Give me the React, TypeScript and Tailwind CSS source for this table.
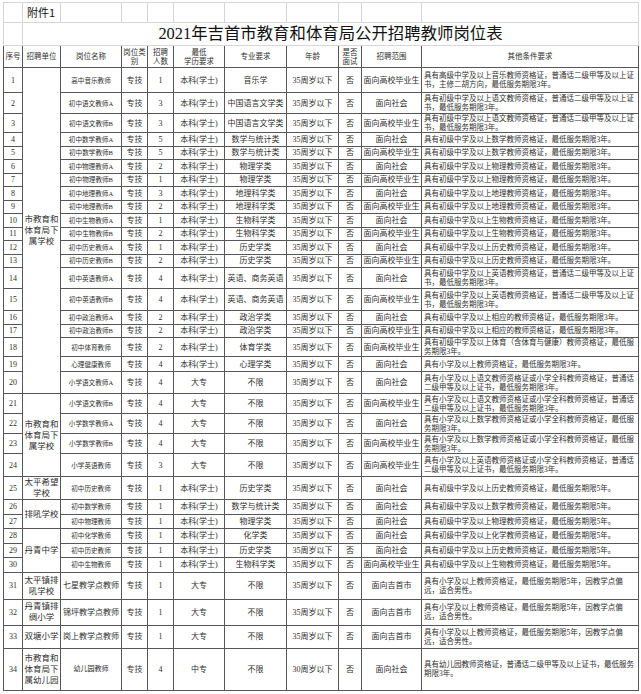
import React from "react";

type Row = [string, string, string, string, string, string, string, string, string, string];

const A3 = "具有初级中学及以上语文教师资格证，普通话二级甲等及以上证书，最低服务期限3年。";
const EN = "具有初级中学及以上英语教师资格证，普通话二级甲等及以上证书，最低服务期限3年。";
const ZZ = "具有初级中学及以上相应的教师资格证，最低服务期限3年。";
const XY = "具有小学及以上语文教师资格证或小学全科教师资格证，普通话二级甲等及以上证书，最低服务期限3年。";
const XS = "具有小学及以上数学教师资格证或小学全科教师资格证，最低服务期限3年。";
const JX = "具有小学及以上教师资格证，最低服务期限5年，因教学点偏远，适合男性。";
const cz = (s: string, y = 3) => `具有初级中学及以上${s}教师资格证，最低服务期限${y}年。`;

const BK = "本科(学士)";
const AGE = "35周岁以下";
const SH = "面向社会";
const GX = "面向高校毕业生";
const S = "h-[13.5px]";
const S2 = "h-[14.5px]";

// last field is the row height class
const rows: Row[] = [
  ["高中音乐教师", "专技", "1", BK, "音乐学", AGE, "否", GX, "具有高级中学及以上音乐教师资格证，普通话二级甲等及以上证书，主修二胡方向，最低服务期限3年。", "h-[25px]"],
  ["初中语文教师A", "专技", "3", BK, "中国语言文学类", AGE, "否", SH, A3, "h-[21px]"],
  ["初中语文教师B", "专技", "3", BK, "中国语言文学类", AGE, "否", GX, A3, "h-[19px]"],
  ["初中数学教师A", "专技", "5", BK, "数学与统计类", AGE, "否", SH, cz("数学"), S],
  ["初中数学教师B", "专技", "5", BK, "数学与统计类", AGE, "否", GX, cz("数学"), S],
  ["初中物理教师A", "专技", "2", BK, "物理学类", AGE, "否", SH, cz("物理"), S],
  ["初中物理教师B", "专技", "1", BK, "物理学类", AGE, "否", GX, cz("物理"), S],
  ["初中地理教师A", "专技", "3", BK, "地理科学类", AGE, "否", SH, cz("地理"), S],
  ["初中地理教师B", "专技", "2", BK, "地理科学类", AGE, "否", GX, cz("地理"), S],
  ["初中生物教师A", "专技", "1", BK, "生物科学类", AGE, "否", SH, cz("生物"), S],
  ["初中生物教师B", "专技", "2", BK, "生物科学类", AGE, "否", GX, cz("生物"), S],
  ["初中历史教师A", "专技", "1", BK, "历史学类", AGE, "否", SH, cz("历史"), S],
  ["初中历史教师B", "专技", "2", BK, "历史学类", AGE, "否", GX, cz("历史"), S],
  ["初中英语教师A", "专技", "4", BK, "英语、商务英语", AGE, "否", SH, EN, "h-[21px]"],
  ["初中英语教师B", "专技", "4", BK, "英语、商务英语", AGE, "否", GX, EN, "h-[22px]"],
  ["初中政治教师A", "专技", "2", BK, "政治学类", AGE, "否", SH, ZZ, S],
  ["初中政治教师B", "专技", "2", BK, "政治学类", AGE, "否", GX, ZZ, S],
  ["初中体育教师", "专技", "2", BK, "体育学类", AGE, "否", GX, "具有初级中学及以上体育（含体育与健康）教师资格证，最低服务期限3年。", "h-[19px]"],
  ["心理健康教师", "专技", "4", BK, "心理学类", AGE, "否", SH, "具有小学及以上教师资格证，最低服务期限3年。", "h-[15px]"],
  ["小学语文教师A", "专技", "4", "大专", "不限", AGE, "否", SH, XY, "h-[22px]"],
  ["小学语文教师B", "专技", "4", "大专", "不限", AGE, "否", GX, XY, "h-[20px]"],
  ["小学数学教师A", "专技", "4", "大专", "不限", AGE, "否", SH, XS, "h-[20px]"],
  ["小学数学教师B", "专技", "4", "大专", "不限", AGE, "否", GX, XS, "h-[20px]"],
  ["小学英语教师", "专技", "3", "大专", "不限", AGE, "否", GX, "具有小学及以上英语教师资格证或小学全科教师资格证，普通话二级甲等及以上证书，最低服务期限3年。", "h-[23px]"],
  ["初中历史教师", "专技", "1", BK, "历史学类", AGE, "否", SH, cz("历史", 5), "h-[19px]"],
  ["初中数学教师", "专技", "1", BK, "数学与统计类", AGE, "否", SH, cz("数学", 5), S2],
  ["初中物理教师", "专技", "1", BK, "物理学类", AGE, "否", SH, cz("物理", 5), S2],
  ["初中化学教师", "专技", "1", BK, "化学类", AGE, "否", SH, cz("化学", 5), S2],
  ["初中历史教师", "专技", "1", BK, "历史学类", AGE, "否", SH, cz("历史", 5), S2],
  ["初中生物教师", "专技", "1", BK, "生物科学类", AGE, "否", GX, cz("生物", 5), S2],
  ["七星教学点教师", "专技", "1", "大专", "不限", AGE, "否", "面向吉首市", JX, "h-[27px]"],
  ["锦坪教学点教师", "专技", "1", "大专", "不限", AGE, "否", "面向吉首市", JX, "h-[26px]"],
  ["岗上教学点教师", "专技", "1", "大专", "不限", AGE, "否", "面向吉首市", JX, "h-[23px]"],
  ["幼儿园教师", "专技", "4", "中专", "不限", "30周岁以下", "否", SH, "具有幼儿园教师资格证，普通话二级甲等及以上证书，最低服务期限3年。", "h-[42px]"],
];

const units: Record<number, [number, string]> = {
  1: [20, "市教育和\n体育局下\n属学校"],
  21: [4, "市教育和\n体育局下\n属学校"],
  25: [1, "太平希望\n学校"],
  26: [2, "排吼学校"],
  28: [3, "丹青中学"],
  31: [1, "太平镇排\n吼学校"],
  32: [1, "丹青镇排\n绸小学"],
  33: [1, "双塘小学"],
  34: [1, "市教育和\n体育局下\n属幼儿园"],
};

const td = "border border-[#575757] p-0 text-center align-middle";
const light = "border border-[#d6d6d6] p-0";

export default function App() {
  return (
    <div className="bg-white w-[641px] h-[694px] pl-[3px] pt-[2px] text-[#2f2f2f] font-['Liberation_Serif','Noto_Sans_CJK_SC',serif] text-[8px] leading-[9px]">
      <table className="table-fixed border-collapse w-[635px]">
        <colgroup>
          <col className="w-[19px]" />
          <col className="w-[38px]" />
          <col className="w-[61px]" />
          <col className="w-[26px]" />
          <col className="w-[26px]" />
          <col className="w-[51px]" />
          <col className="w-[62px]" />
          <col className="w-[52px]" />
          <col className="w-[23px]" />
          <col className="w-[60px]" />
          <col className="w-[217px]" />
        </colgroup>
        <tbody>
          <tr className="h-[20px]">
            <td className={light} />
            <td className={`${light} pl-[4px] text-[11px] text-[#111] font-['Noto_Sans_CJK_SC',sans-serif]`}>附件1</td>
            {Array.from({ length: 9 }).map((_, i) => (
              <td key={i} className={light} />
            ))}
          </tr>
          <tr className="h-[23px]">
            <td className={light} />
            <td className={`${light} text-center text-[16.4px] leading-[20px] text-[#111]`} colSpan={10}>
              2021年吉首市教育和体育局公开招聘教师岗位表
            </td>
          </tr>
          <tr className="h-[22px] text-[7.5px] whitespace-pre-line">
            <td className={td}>序号</td>
            <td className={td}>招聘单位</td>
            <td className={td}>岗位名称</td>
            <td className={td}>{"岗位类\n别"}</td>
            <td className={td}>{"招聘\n人数"}</td>
            <td className={td}>{"最低\n学历要求"}</td>
            <td className={td}>专业要求</td>
            <td className={td}>年龄</td>
            <td className={td}>{"是否\n面试"}</td>
            <td className={td}>招聘范围</td>
            <td className={td}>其他条件要求</td>
          </tr>
          {rows.map((r, i) => {
            const n = i + 1;
            const u = units[n];
            const nameSize = n >= 31 && n <= 33 ? "text-[8px]" : n === 34 ? "text-[7px]" : "text-[6.6px]";
            return (
              <tr key={n} className={r[9]}>
                <td className={td}>{n}</td>
                {u && (
                  <td className={`${td} whitespace-pre-line text-[8.5px] leading-[11px]`} rowSpan={u[0]}>
                    {u[1]}
                  </td>
                )}
                <td className={`${td} ${nameSize}`}>{r[0]}</td>
                <td className={td}>{r[1]}</td>
                <td className={td}>{r[2]}</td>
                <td className={td}>{r[3]}</td>
                <td className={td}>{r[4]}</td>
                <td className={td}>{r[5]}</td>
                <td className={td}>{r[6]}</td>
                <td className={td}>{r[7]}</td>
                <td className={`${td} text-left pl-[2px] pr-[1px] text-[7.5px]`}>{r[8]}</td>
              </tr>
            );
          })}
        </tbody>
      </table>
    </div>
  );
}
